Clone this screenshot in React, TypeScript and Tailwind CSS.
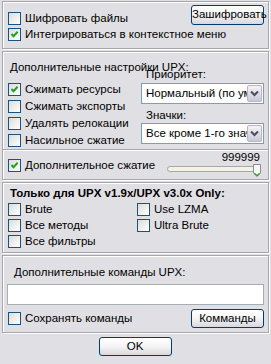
import React from "react";

const panel =
  "mx-[2px] border border-[#a7a6aa] shadow-[1px_1px_0_#fff,inset_1px_1px_0_#fff]";

function Check({ checked }: { checked?: boolean }) {
  return (
    <div className="w-[13px] h-[13px] shrink-0 border border-[#1c5180] bg-gradient-to-br from-[#dcdcd7] to-white">
      {checked && (
        <svg width="11" height="11" viewBox="0 0 11 11">
          <path d="M2.5 5 L4.5 7.2 L8.6 2.8" fill="none" stroke="#21a121" strokeWidth="2" />
        </svg>
      )}
    </div>
  );
}

function Row({ label, checked, h = "h-[17px]" }: { label: string; checked?: boolean; h?: string }) {
  return (
    <div className={`flex items-center gap-[4px] whitespace-nowrap ${h}`}>
      <Check checked={checked} />
      <span>{label}</span>
    </div>
  );
}

function XpButton({ children, h = "h-[20px]" }: { children: React.ReactNode; h?: string }) {
  return (
    <button
      className={`${h} w-[73px] shrink-0 rounded-[3px] border border-[#003c74] bg-gradient-to-b from-white via-[#f4f4f4] to-[#d8d7de] text-[11.5px] font-normal leading-none text-black`}
    >
      {children}
    </button>
  );
}

function Combo({ text }: { text: string }) {
  return (
    <div className="flex h-[21px] w-[123px] items-stretch border border-[#7f9db9] bg-white p-[1px]">
      <div className="flex-1 overflow-hidden whitespace-nowrap pl-[3px] leading-[17px]">{text}</div>
      <div className="flex w-[15px] items-center justify-center rounded-[2px] border border-[#b6b6c8] bg-gradient-to-b from-[#f4f4f8] to-[#c9c9d6]">
        <svg width="9" height="7" viewBox="0 0 9 7">
          <path d="M1 1.5 L4.5 5 L8 1.5" fill="none" stroke="#4d4d5c" strokeWidth="2" />
        </svg>
      </div>
    </div>
  );
}

export default function App() {
  return (
    <div className="w-[271px] h-[364px] bg-[#e0dfe3] pt-[1px] font-['Liberation_Sans',Arial,sans-serif] text-[11.5px] leading-[13px] text-black flex flex-col gap-[2px]">
      {/* encrypt */}
      <div className={`${panel} h-[48px] flex pl-[5px] pr-[4px]`}>
        <div className="flex-1 min-w-0 pt-[8px]">
          <Row label="Шифровать файлы" h="h-[16px]" />
          <Row label="Интегрироваться в контекстное меню" checked h="h-[16px]" />
        </div>
        <div className="pt-[3px]">
          <XpButton>Зашифровать</XpButton>
        </div>
      </div>

      {/* upx settings */}
      <div className={`${panel} h-[129px] flex flex-col`}>
        <div className="h-[97px] flex pl-[5px]">
          <div className="w-[133px] shrink-0 pt-[9px]">
            <div className="ml-[2px] whitespace-nowrap">Дополнительные настройки UPX:</div>
            <div className="mt-[7px]">
              <Row label="Сжимать ресурсы" checked />
              <Row label="Сжимать экспорты" />
              <Row label="Удалять релокации" />
              <Row label="Насильное сжатие" h="h-[16px]" />
            </div>
          </div>
          <div className="pt-[16px]">
            <div className="pl-[5px]">Приоритет:</div>
            <div className="mt-[2px]">
              <Combo text="Нормальный (по умолчанию)" />
            </div>
            <div className="pl-[5px] mt-[5px]">Значки:</div>
            <div className="mt-[1px]">
              <Combo text="Все кроме 1-го значка" />
            </div>
          </div>
        </div>
        <div className="h-[2px] border-t border-[#a7a6aa] bg-white" />
        <div className="h-[28px] flex items-center pl-[5px]">
          <div className="flex-1">
            <Row label="Дополнительное сжатие" checked />
          </div>
          <div className="w-[96px] mr-[7px] self-start flex flex-col items-end">
            <div className="pr-[1px]">999999</div>
            <div className="relative h-[14px] w-full">
              <div className="absolute left-[2px] right-[1px] top-[2px] h-[6px] rounded-[3px] border border-[#a8a89c] bg-[#f3f2ea]" />
              <svg className="absolute right-0 top-[0px]" width="8" height="13" viewBox="0 0 8 13">
                <path d="M0.5 0.5 H7.5 V9 L4 12.5 L0.5 9 Z" fill="#f6f6f6" stroke="#8c8c8c" />
                <path d="M1.5 9.3 L4 11.6 L6.5 9.3" fill="none" stroke="#21a121" strokeWidth="1.2" />
              </svg>
            </div>
          </div>
        </div>
      </div>

      {/* upx only */}
      <div className={`${panel} h-[71px] pl-[5px] pt-[4px]`}>
        <div className="ml-[2px] font-bold whitespace-nowrap">Только для UPX v1.9x/UPX v3.0x Only:</div>
        <div className="mt-[1px] grid grid-cols-[129px_1fr]">
          <Row label="Brute" h="h-[16px]" />
          <Row label="Use LZMA" h="h-[16px]" />
          <Row label="Все методы" h="h-[16px]" />
          <Row label="Ultra Brute" h="h-[16px]" />
          <Row label="Все фильтры" h="h-[16px]" />
        </div>
      </div>

      {/* commands */}
      <div className={`${panel} h-[78px] pl-[5px] pr-[4px] pt-[10px]`}>
        <div className="ml-[6px]">Дополнительные команды UPX:</div>
        <div className="-ml-[1px] mt-[5px] h-[21px] border border-[#a5acb2] bg-white" />
        <div className="mt-[4px] h-[19px] flex items-center justify-between">
          <Row label="Сохранять команды" h="h-[19px]" />
          <XpButton h="h-[19px]">Комманды</XpButton>
        </div>
      </div>

      <div className="mt-[2px] flex justify-center pr-[1px]">
        <XpButton h="h-[19px]">OK</XpButton>
      </div>
    </div>
  );
}
